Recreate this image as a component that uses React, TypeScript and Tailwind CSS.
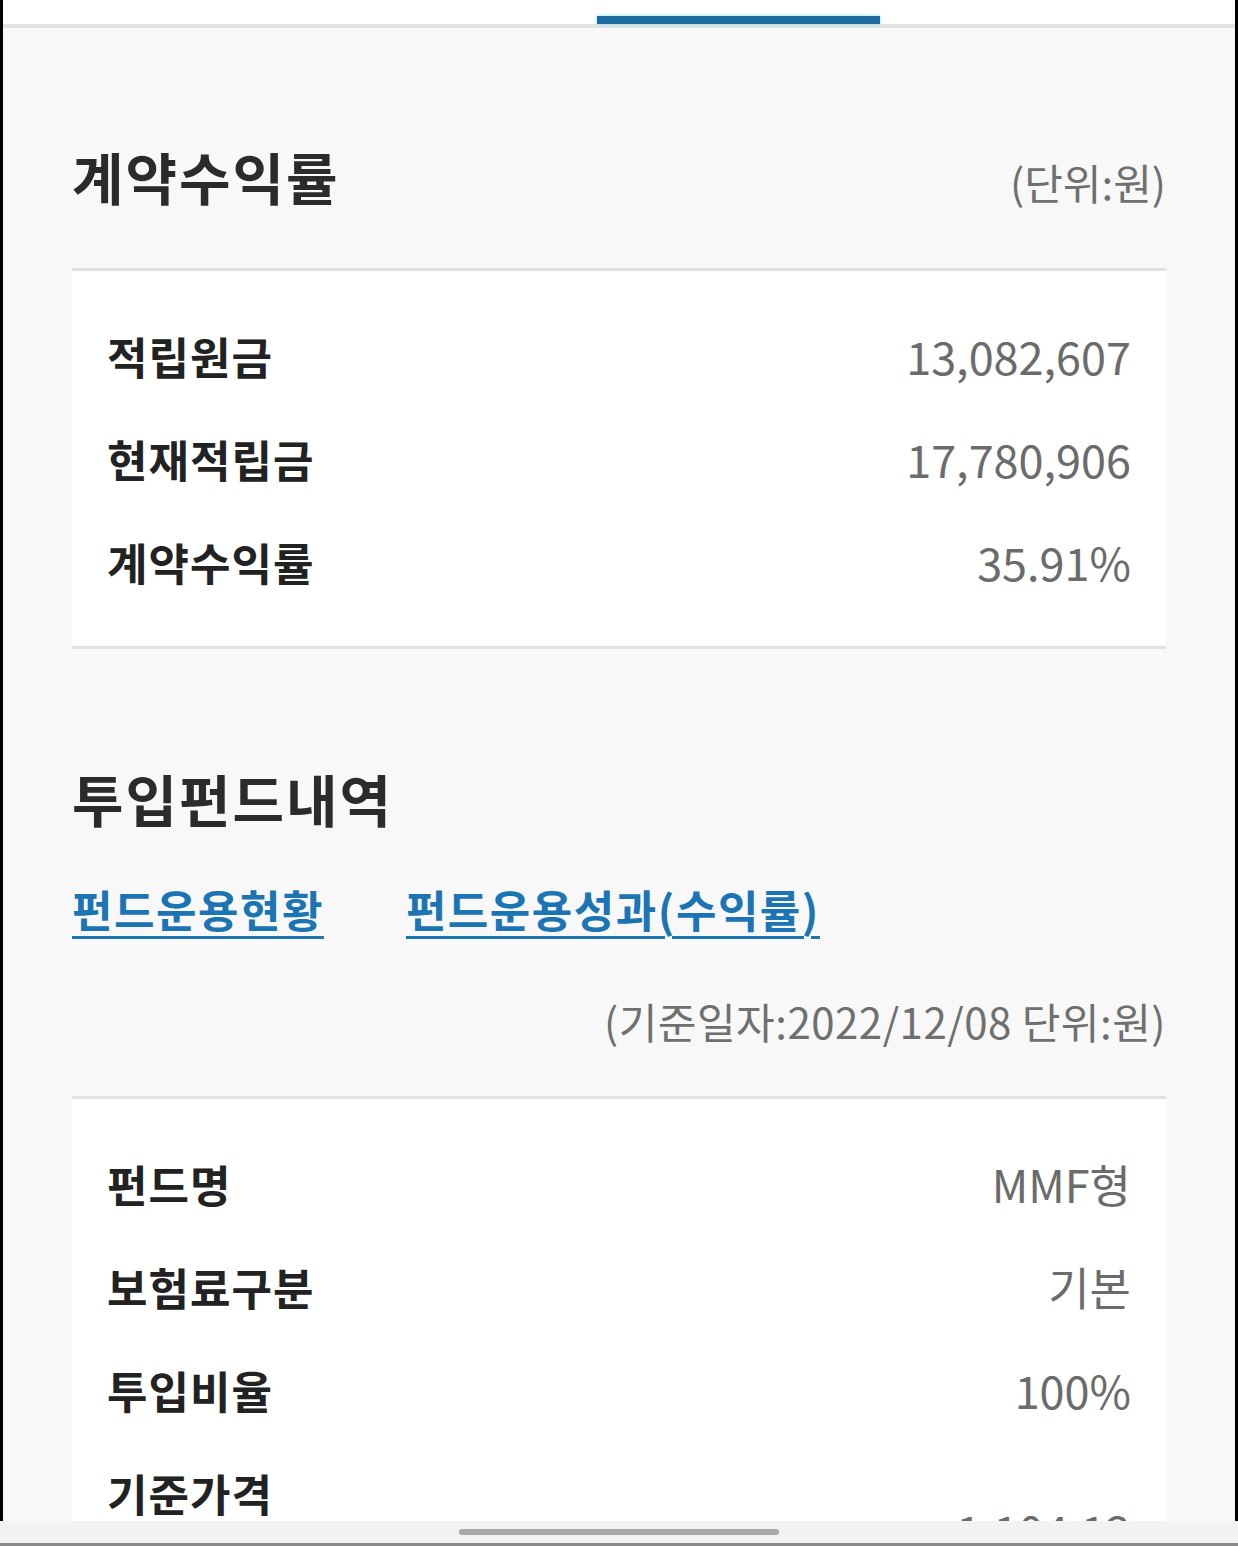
const font = { fontFamily: '"Noto Sans CJK KR", "Noto Sans", sans-serif' };

const summary = [
  { label: "적립원금", value: "13,082,607" },
  { label: "현재적립금", value: "17,780,906" },
  { label: "계약수익률", value: "35.91%" },
];

const funds = [
  { label: "펀드명", value: "MMF형" },
  { label: "보험료구분", value: "기본" },
  { label: "투입비율", value: "100%" },
];

function Row({ label, value }: { label: string; value: string }) {
  return (
    <div className="flex h-[103px] items-center justify-between px-[35px]">
      <span className="text-[44px] font-bold leading-none tracking-[1px] text-[#222]">{label}</span>
      <span className="text-[45px] leading-none text-[#6b6b6b]">{value}</span>
    </div>
  );
}

export default function App() {
  return (
    <div className="relative h-[1546px] w-[1238px] overflow-hidden bg-[#f8f8f8]" style={font}>
      <div className="h-full border-x-[3px] border-black">
        {/* tab strip */}
        <div className="relative h-[24px] bg-white">
          <div className="absolute bottom-0 left-[594px] h-[8px] w-[283px] bg-[#1d6b9c] shadow-[0_0_4px_#8fdcf5]" />
        </div>
        <div className="h-[4px] bg-[#e3e3e3]" />

        <div className="px-[69px]">
          <div className="flex items-baseline justify-between pt-[115px] pb-[55px]">
            <h2 className="text-[56px] font-bold leading-[66px] tracking-[2px] text-[#2b2b2b]">계약수익률</h2>
            <span className="text-[42px] text-[#6f6f6f]">(단위:원)</span>
          </div>

          <div className="border-y-[3px] border-[#e2e2e2] bg-white py-[33px]">
            {summary.map((r) => (
              <Row key={r.label} {...r} />
            ))}
          </div>

          <h2 className="pt-[116px] text-[56px] font-bold leading-[66px] tracking-[2px] text-[#2b2b2b]">투입펀드내역</h2>

          <div className="mt-[51px] flex gap-[82px] text-[44px] font-bold leading-[54px] tracking-[1.5px] text-[#1b74b3]">
            <a className="underline decoration-[3px] underline-offset-[8px]">펀드운용현황</a>
            <a className="underline decoration-[3px] underline-offset-[8px]">펀드운용성과(수익률)</a>
          </div>

          <div className="mt-[59px] text-right text-[42px] leading-[52px] tracking-[0.5px] text-[#6f6f6f]">
            (기준일자:2022/12/08 단위:원)
          </div>

          <div className="mt-[49px] border-t-[3px] border-[#e2e2e2] bg-white py-[33px]">
            {funds.map((r) => (
              <Row key={r.label} {...r} />
            ))}
            <div className="flex h-[103px] items-start justify-between px-[35px] pt-[30px]">
              <span className="text-[44px] font-bold leading-none tracking-[1px] text-[#222]">기준가격</span>
              <span className="mt-[36px] text-[45px] leading-none text-[#6b6b6b]">1,104.12</span>
            </div>
          </div>
        </div>
      </div>

      {/* system nav bar */}
      <div className="absolute inset-x-0 bottom-0 flex h-[25px] items-start justify-center border-b-[3px] border-[#8a8a8a] bg-[#f2f2f2]">
        <div className="mt-[8px] h-[6px] w-[320px] rounded-full bg-[#a9a9a9]" />
      </div>
    </div>
  );
}
